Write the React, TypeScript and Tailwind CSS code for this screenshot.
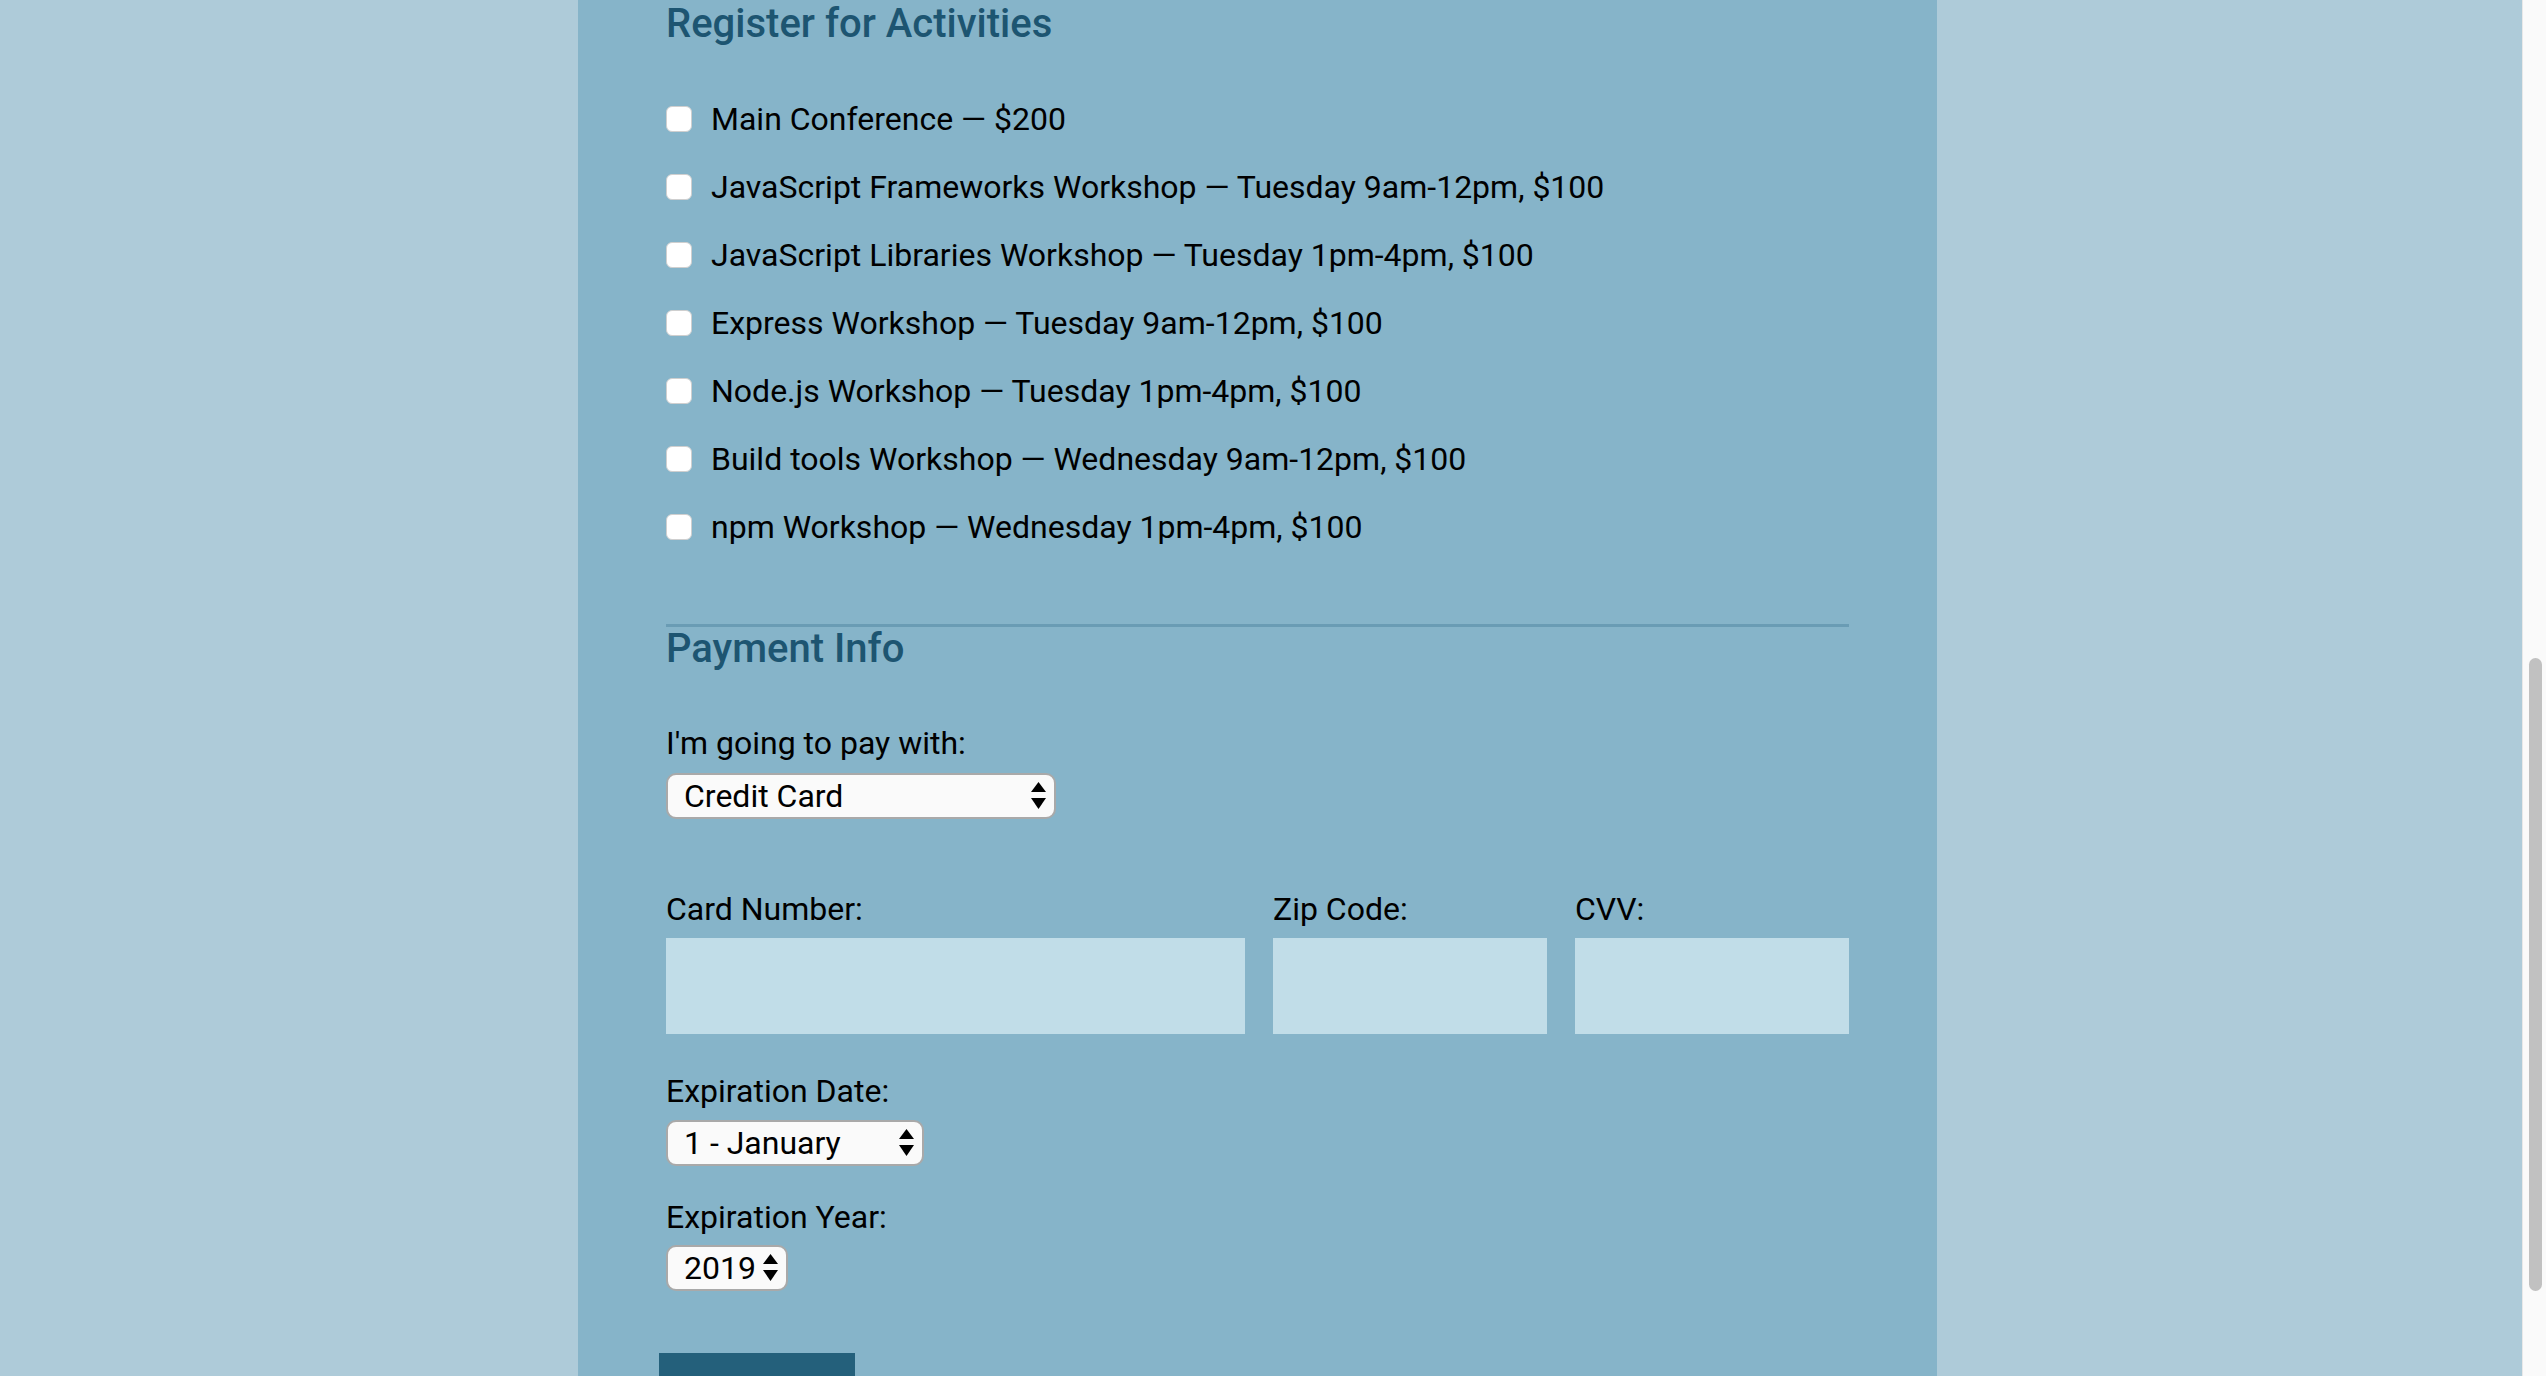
import React from 'react';

const activities = [
  'Main Conference — $200',
  'JavaScript Frameworks Workshop — Tuesday 9am-12pm, $100',
  'JavaScript Libraries Workshop — Tuesday 1pm-4pm, $100',
  'Express Workshop — Tuesday 9am-12pm, $100',
  'Node.js Workshop — Tuesday 1pm-4pm, $100',
  'Build tools Workshop — Wednesday 9am-12pm, $100',
  'npm Workshop — Wednesday 1pm-4pm, $100',
];

const Arrows = () => (
  <svg width="15" height="28" viewBox="0 0 15 28" className="shrink-0">
    <path d="M7.5 0 L15 10 L0 10 Z" fill="#000" />
    <path d="M0 16 L15 16 L7.5 27 Z" fill="#000" />
  </svg>
);

const SelectBox = ({ value, width }: { value: string; width: string }) => (
  <div
    className={`${width} h-[46px] flex items-center justify-between pl-[16px] pr-[8px] bg-[#fafafa] border-2 border-[#a9a9a9] rounded-[10px] text-[32px] leading-[40px]`}
  >
    <span>{value}</span>
    <Arrows />
  </div>
);

const Label = ({ children, className = '' }: { children: React.ReactNode; className?: string }) => (
  <p className={`text-[32px] leading-[40px] text-black ${className}`}>{children}</p>
);

const App = () => {
  return (
    <div className="flex h-screen w-full overflow-hidden bg-[#aecbd9] font-[Roboto,sans-serif]">
      <div className="flex-1 h-full">
        <div className="ml-[578px] w-[1359px] h-full bg-[#86b4c9] px-[88px]">
          <h2 className="text-[40px] leading-[48px] font-medium text-[#1d5571]">
            Register for Activities
          </h2>

          <div className="mt-[37px] flex flex-col">
            {activities.map((a) => (
              <label key={a} className="h-[68px] flex items-center gap-[19px]">
                <span className="w-[26px] h-[26px] shrink-0 bg-white border border-[#cfcfcf] rounded-[6px]" />
                <span className="text-[32px] leading-[40px] text-black">{a}</span>
              </label>
            ))}
          </div>

          <div className="mt-[63px] h-[3px] bg-[#6a9cb4]" />

          <h2 className="-mt-[2px] text-[40px] leading-[48px] font-medium text-[#1d5571]">
            Payment Info
          </h2>

          <Label className="mt-[50px]">I'm going to pay with:</Label>
          <div className="mt-[10px]">
            <SelectBox value="Credit Card" width="w-[390px]" />
          </div>

          <div className="mt-[70px] grid grid-cols-[579px_274px_274px] gap-x-[28px]">
            <Label>Card Number:</Label>
            <Label>Zip Code:</Label>
            <Label>CVV:</Label>
            <input className="mt-[9px] h-[96px] bg-[#c1dde8] border-0 outline-none" />
            <input className="mt-[9px] h-[96px] bg-[#c1dde8] border-0 outline-none" />
            <input className="mt-[9px] h-[96px] bg-[#c1dde8] border-0 outline-none" />
          </div>

          <Label className="mt-[37px]">Expiration Date:</Label>
          <div className="mt-[9px]">
            <SelectBox value="1 - January" width="w-[258px]" />
          </div>

          <Label className="mt-[31px]">Expiration Year:</Label>
          <div className="mt-[8px]">
            <SelectBox value="2019" width="w-[122px]" />
          </div>

          <button className="mt-[62px] -ml-[7px] w-[196px] h-[80px] bg-[#24607b]" />
        </div>
      </div>

      <div className="w-[24px] h-full bg-[#fafafa] border-l border-[#e8e8e8] flex flex-col pt-[658px]">
        <div className="ml-[6px] w-[13px] h-[633px] rounded-full bg-[#c1c1c1]" />
      </div>
    </div>
  );
};

export default App;
